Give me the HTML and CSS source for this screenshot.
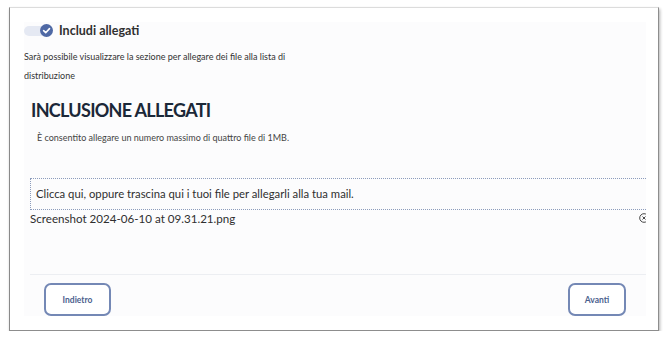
FILE: index.html
```html
<!DOCTYPE html>
<html lang="it">
<head>
    <meta charset="UTF-8">
    <meta name="viewport" content="width=device-width, initial-scale=1.0">
    <title>Inclusione allegati</title>
    <link rel="stylesheet" href="styles.css">
</head>
<body>
    <div class="frame">
        <div class="content">
            <div class="toggle-row">
                <span class="toggle">
                    <span class="toggle-knob">
                        <svg width="13" height="13" viewBox="0 0 13 13">
                            <circle cx="6.5" cy="6.5" r="6.5" fill="#4f69a5"/>
                            <path d="M3.6 6.7 L5.7 8.7 L9.5 4.6" fill="none" stroke="#fff" stroke-width="1.6" stroke-linecap="round" stroke-linejoin="round"/>
                        </svg>
                    </span>
                </span>
                <span class="toggle-label">Includi allegati</span>
            </div>
            <p class="toggle-help">Sarà possibile visualizzare la sezione per allegare dei file alla lista di<br>distribuzione</p>

            <h2 class="section-title">INCLUSIONE ALLEGATI</h2>
            <p class="section-note">È consentito allegare un numero massimo di quattro file di 1MB.</p>

            <div class="dropzone">Clicca qui, oppure trascina qui i tuoi file per allegarli alla tua mail.</div>
            <div class="file-row">
                <span class="file-name">Screenshot 2024-06-10 at 09.31.21.png</span>
                <svg class="file-remove" width="10" height="10" viewBox="0 0 10 10">
                    <circle cx="5" cy="5" r="4.3" fill="none" stroke="#333" stroke-width="0.9"/>
                    <path d="M3.5 3.5 L6.5 6.5 M6.5 3.5 L3.5 6.5" stroke="#333" stroke-width="0.9"/>
                </svg>
            </div>

            <div class="actions">
                <button type="button" class="btn">Indietro</button>
                <button type="button" class="btn">Avanti</button>
            </div>
        </div>
    </div>
</body>
</html>
```

FILE: styles.css
```css
body {
    margin: 0;
    background-color: #fff;
    font-family: 'Lato', 'Open Sans', sans-serif;
    color: #2b2b2b;
}

.frame {
    box-sizing: border-box;
    margin: 7px 0 0 9px;
    width: 650px;
    height: 324px;
    padding: 14px 12px 13px 14px;
    background-color: #fff;
    border-top: 1px solid #dcdcdc;
    border-left: 1px solid #8a8a8a;
    border-right: 1px solid #8d8d8d;
    border-bottom: 1px solid #8d8d8d;
    box-shadow: 1px 2px 3px rgba(0, 0, 0, 0.3);
}

.content {
    height: 294px;
    background-color: #fcfcfd;
    overflow: hidden;
    padding-left: 6px;
}

.toggle-row {
    display: flex;
    align-items: center;
    height: 13px;
    margin: 2px 0 0 -6px;
}

.toggle {
    display: flex;
    align-items: center;
    justify-content: flex-end;
    width: 22px;
    height: 10px;
    background-color: #e5e9f3;
    border-radius: 5px 0 0 5px;
}

.toggle-knob {
    display: flex;
    margin-right: -6.5px;
}

.toggle-label {
    margin-left: 13px;
    font-size: 12.5px;
    font-weight: 700;
    color: #303030;
}

.toggle-help {
    margin: 10px 0 0 -6px;
    font-size: 9px;
    line-height: 19px;
    color: #333;
}

.section-title {
    margin: 14px 0 0 1px;
    font-size: 18px;
    font-weight: 700;
    color: #1b2838;
    letter-spacing: -0.7px;
}

.section-note {
    margin: 11px 0 0 7px;
    font-size: 9px;
    color: #444;
}

.dropzone {
    margin-top: 35px;
    width: 640px;
    height: 30px;
    border: 1px dotted #8c9cbc;
    border-right: none;
    padding-left: 5px;
    font-size: 11.3px;
    line-height: 30px;
    color: #2f2f2f;
}

.file-row {
    display: flex;
    align-items: center;
    justify-content: space-between;
    width: 619px;
    height: 16px;
}

.file-name {
    font-size: 11.6px;
    color: #2f2f2f;
}

.file-remove {
    flex: none;
}

.actions {
    display: flex;
    justify-content: space-between;
    margin-top: 48px;
    border-top: 1px solid #eceef2;
    padding: 8px 20px 0 14px;
}

.btn {
    box-sizing: border-box;
    height: 33px;
    padding: 0;
    background-color: #fff;
    border: 2px solid #7488b5;
    border-radius: 7px;
    font-family: inherit;
    font-size: 8.5px;
    font-weight: 700;
    color: #4c5f8e;
}

.btn:first-child {
    width: 67px;
}

.btn:last-child {
    width: 58px;
}
```
